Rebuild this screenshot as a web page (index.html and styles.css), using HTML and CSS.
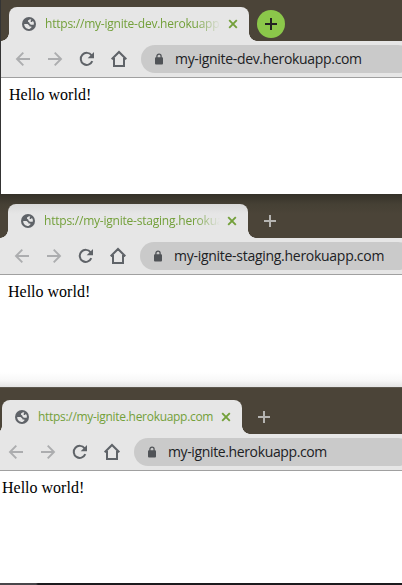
FILE: index.html
```html
<!DOCTYPE html>
<html lang="en">
<head>
<meta charset="utf-8">
<title>my-ignite environments</title>
<link rel="stylesheet" href="styles.css">
</head>
<body>
<svg class="defs" width="0" height="0">
  <symbol id="globe" viewBox="0 0 14 14"><circle cx="7" cy="7" r="7" fill="#5f6368"/><path d="M2.200 7H5.600L7.500 8.700V9.600H9.400V10.600L7.600 12C4.500 12.200 2.100 9.800 2.200 7ZM8 2.200 6 3.500V4.700L7.300 5.500V6.300L8.800 7.700H11.700C12.200 6 11.700 4.700 10.900 3.900L9.800 5H8.700V3.700L9.300 2.600Z" fill="#e6e6e6"/></symbol>
  <symbol id="close" viewBox="0 0 10 10"><path d="m1.200 1.200 7.600 7.600M8.800 1.200 1.200 8.800" stroke="#73a03a" stroke-width="1.900"/></symbol>
  <symbol id="plus" viewBox="0 0 12 12"><path d="M6 0v12M0 6h12" stroke="currentColor" stroke-width="2"/></symbol>
  <symbol id="back" viewBox="0 0 16 16"><path d="M15 8H2.500M8.300 1.700 2 8l6.300 6.300" fill="none" stroke="#acadaf" stroke-width="1.900"/></symbol>
  <symbol id="reload" viewBox="0 0 16 16"><path d="M13.300 10.200A6 6 0 1 1 12.600 4.300" fill="none" stroke="#5f6368" stroke-width="2"/><path d="M15 1v6.300H8.700Z" fill="#5f6368"/></symbol>
  <symbol id="home" viewBox="0 0 18 18"><path d="M1.700 9.300 9 2l7.300 7.300M4 8v8h10V8" fill="none" stroke="#5f6368" stroke-width="2"/></symbol>
  <symbol id="lock" viewBox="0 0 8 12"><path d="M1.900 5V3.200a2.100 2.100 0 0 1 4.200 0V5" fill="none" stroke="#505357" stroke-width="1.300"/><rect y="4.300" width="8" height="7.200" rx="1" fill="#505357"/></symbol>
</svg>

<section class="window dev">
  <div class="strip">
    <div class="tab"><svg class="globe"><use href="#globe"/></svg><span class="title faded">https://my-ignite-dev.herokuapp.com</span><svg class="close"><use href="#close"/></svg></div>
    <div class="new active"><svg><use href="#plus"/></svg></div>
  </div>
  <div class="toolbar">
    <svg class="nav"><use href="#back"/></svg><svg class="nav forward"><use href="#back"/></svg><svg class="nav"><use href="#reload"/></svg><svg class="nav home"><use href="#home"/></svg>
    <div class="address"><svg><use href="#lock"/></svg><span>my-ignite-dev.herokuapp.com</span></div>
  </div>
  <main>Hello world!</main>
</section>

<section class="window staging">
  <div class="strip">
    <div class="tab"><svg class="globe"><use href="#globe"/></svg><span class="title faded">https://my-ignite-staging.herokuapp.com</span><svg class="close"><use href="#close"/></svg></div>
    <div class="new"><svg><use href="#plus"/></svg></div>
  </div>
  <div class="toolbar">
    <svg class="nav"><use href="#back"/></svg><svg class="nav forward"><use href="#back"/></svg><svg class="nav"><use href="#reload"/></svg><svg class="nav home"><use href="#home"/></svg>
    <div class="address"><svg><use href="#lock"/></svg><span>my-ignite-staging.herokuapp.com</span></div>
  </div>
  <main>Hello world!</main>
</section>

<section class="window production">
  <div class="strip">
    <div class="tab"><svg class="globe"><use href="#globe"/></svg><span class="title">https://my-ignite.herokuapp.com</span><svg class="close"><use href="#close"/></svg></div>
    <div class="new"><svg><use href="#plus"/></svg></div>
  </div>
  <div class="toolbar">
    <svg class="nav"><use href="#back"/></svg><svg class="nav forward"><use href="#back"/></svg><svg class="nav"><use href="#reload"/></svg><svg class="nav home"><use href="#home"/></svg>
    <div class="address"><svg><use href="#lock"/></svg><span>my-ignite.herokuapp.com</span></div>
  </div>
  <main>Hello world!</main>
</section>
<footer></footer>
</body>
</html>
```

FILE: styles.css
```css
* { box-sizing: border-box; }
body { margin: 0; width: 402px; height: 585px; overflow: hidden; background: #fff; }
.defs { display: none; }
svg { display: block; flex: none; }
.window { display: flex; flex-direction: column; overflow: hidden; }
.dev { height: 194px; border-left: 1px solid #343434; }
.staging { height: 193px; }
.production { height: 196px; }
.strip { display: flex; flex: none; align-items: flex-end; height: 41px; padding-left: 8px; background: #4b4438; }
.staging .strip { height: 44px; background: linear-gradient(#343128, #454034 10px, #4b4438 20px); }
.production .strip { height: 47px; padding-left: 2px; border-top: 1px solid #5c574e; }
.tab { position: relative; display: flex; flex: none; align-items: center; width: 240px; height: 34px; padding: 0 11px 0 13px; border-radius: 8px 8px 0 0; background: #e6e6e6; }
.staging .tab { background: linear-gradient(#d9d9d9, #e6e6e6 10px); }
.tab::before, .tab::after { content: ""; position: absolute; bottom: 0; width: 8px; height: 8px; }
.tab::before { left: -8px; background: radial-gradient(circle at 0 0, transparent 7.5px, #e6e6e6 8px); }
.tab::after { right: -8px; background: radial-gradient(circle at 100% 0, transparent 7.5px, #e6e6e6 8px); }
.globe { width: 14px; height: 14px; }
.title { width: 177px; margin-left: 9px; overflow: hidden; white-space: nowrap; font: 12px/18px "Open Sans", sans-serif; letter-spacing: -0.3px; color: #73a03a; }
.dev .title { letter-spacing: -0.22px; }
.staging .title { letter-spacing: -0.22px; }
.faded { -webkit-mask-image: linear-gradient(to right, #000 150px, transparent 176px); mask-image: linear-gradient(to right, #000 150px, transparent 176px); }
.close { width: 10px; height: 10px; margin-left: 6px; }
.new { display: flex; flex: none; align-items: center; justify-content: center; width: 28px; height: 28px; margin: 0 0 3px 8px; border-radius: 50%; color: #b5b4b1; }
.new svg { width: 12px; height: 12px; }
.active { background: #8bc74a; color: #222; }
.toolbar { display: flex; flex: none; align-items: center; height: 37px; padding: 0 0 1px 14px; border-bottom: 1px solid #a0a0a0; background: #e6e6e6; }
.production .toolbar { padding-left: 8px; }
.nav { width: 16px; height: 16px; margin-right: 16px; }
.forward { transform: scaleX(-1); }
.home { width: 18px; height: 18px; margin: 0 13px 0 -1px; }
.address { display: flex; flex: 1; align-items: center; height: 28px; margin-right: -10px; padding-left: 14px; border-radius: 14px; background: #cacaca; }
.address svg { width: 8px; height: 12px; }
.address span { margin-left: 12px; white-space: nowrap; font: 14px/20px "Open Sans", sans-serif; letter-spacing: -0.32px; color: #202124; }
.staging .address span { letter-spacing: -0.28px; }
.production .address span { letter-spacing: -0.37px; }
main { flex: 1; padding: 8px; font: 16px/18px "Liberation Serif", serif; color: #000; background: #fff; }
.staging main { background: linear-gradient(to top, #e4e4e4, #f8f8f8 7px, #fff 15px); }
.production main { padding-left: 2px; }
footer { height: 2px; background: linear-gradient(to right, #48464a 36px, #1c1a1d 38px); }
```
